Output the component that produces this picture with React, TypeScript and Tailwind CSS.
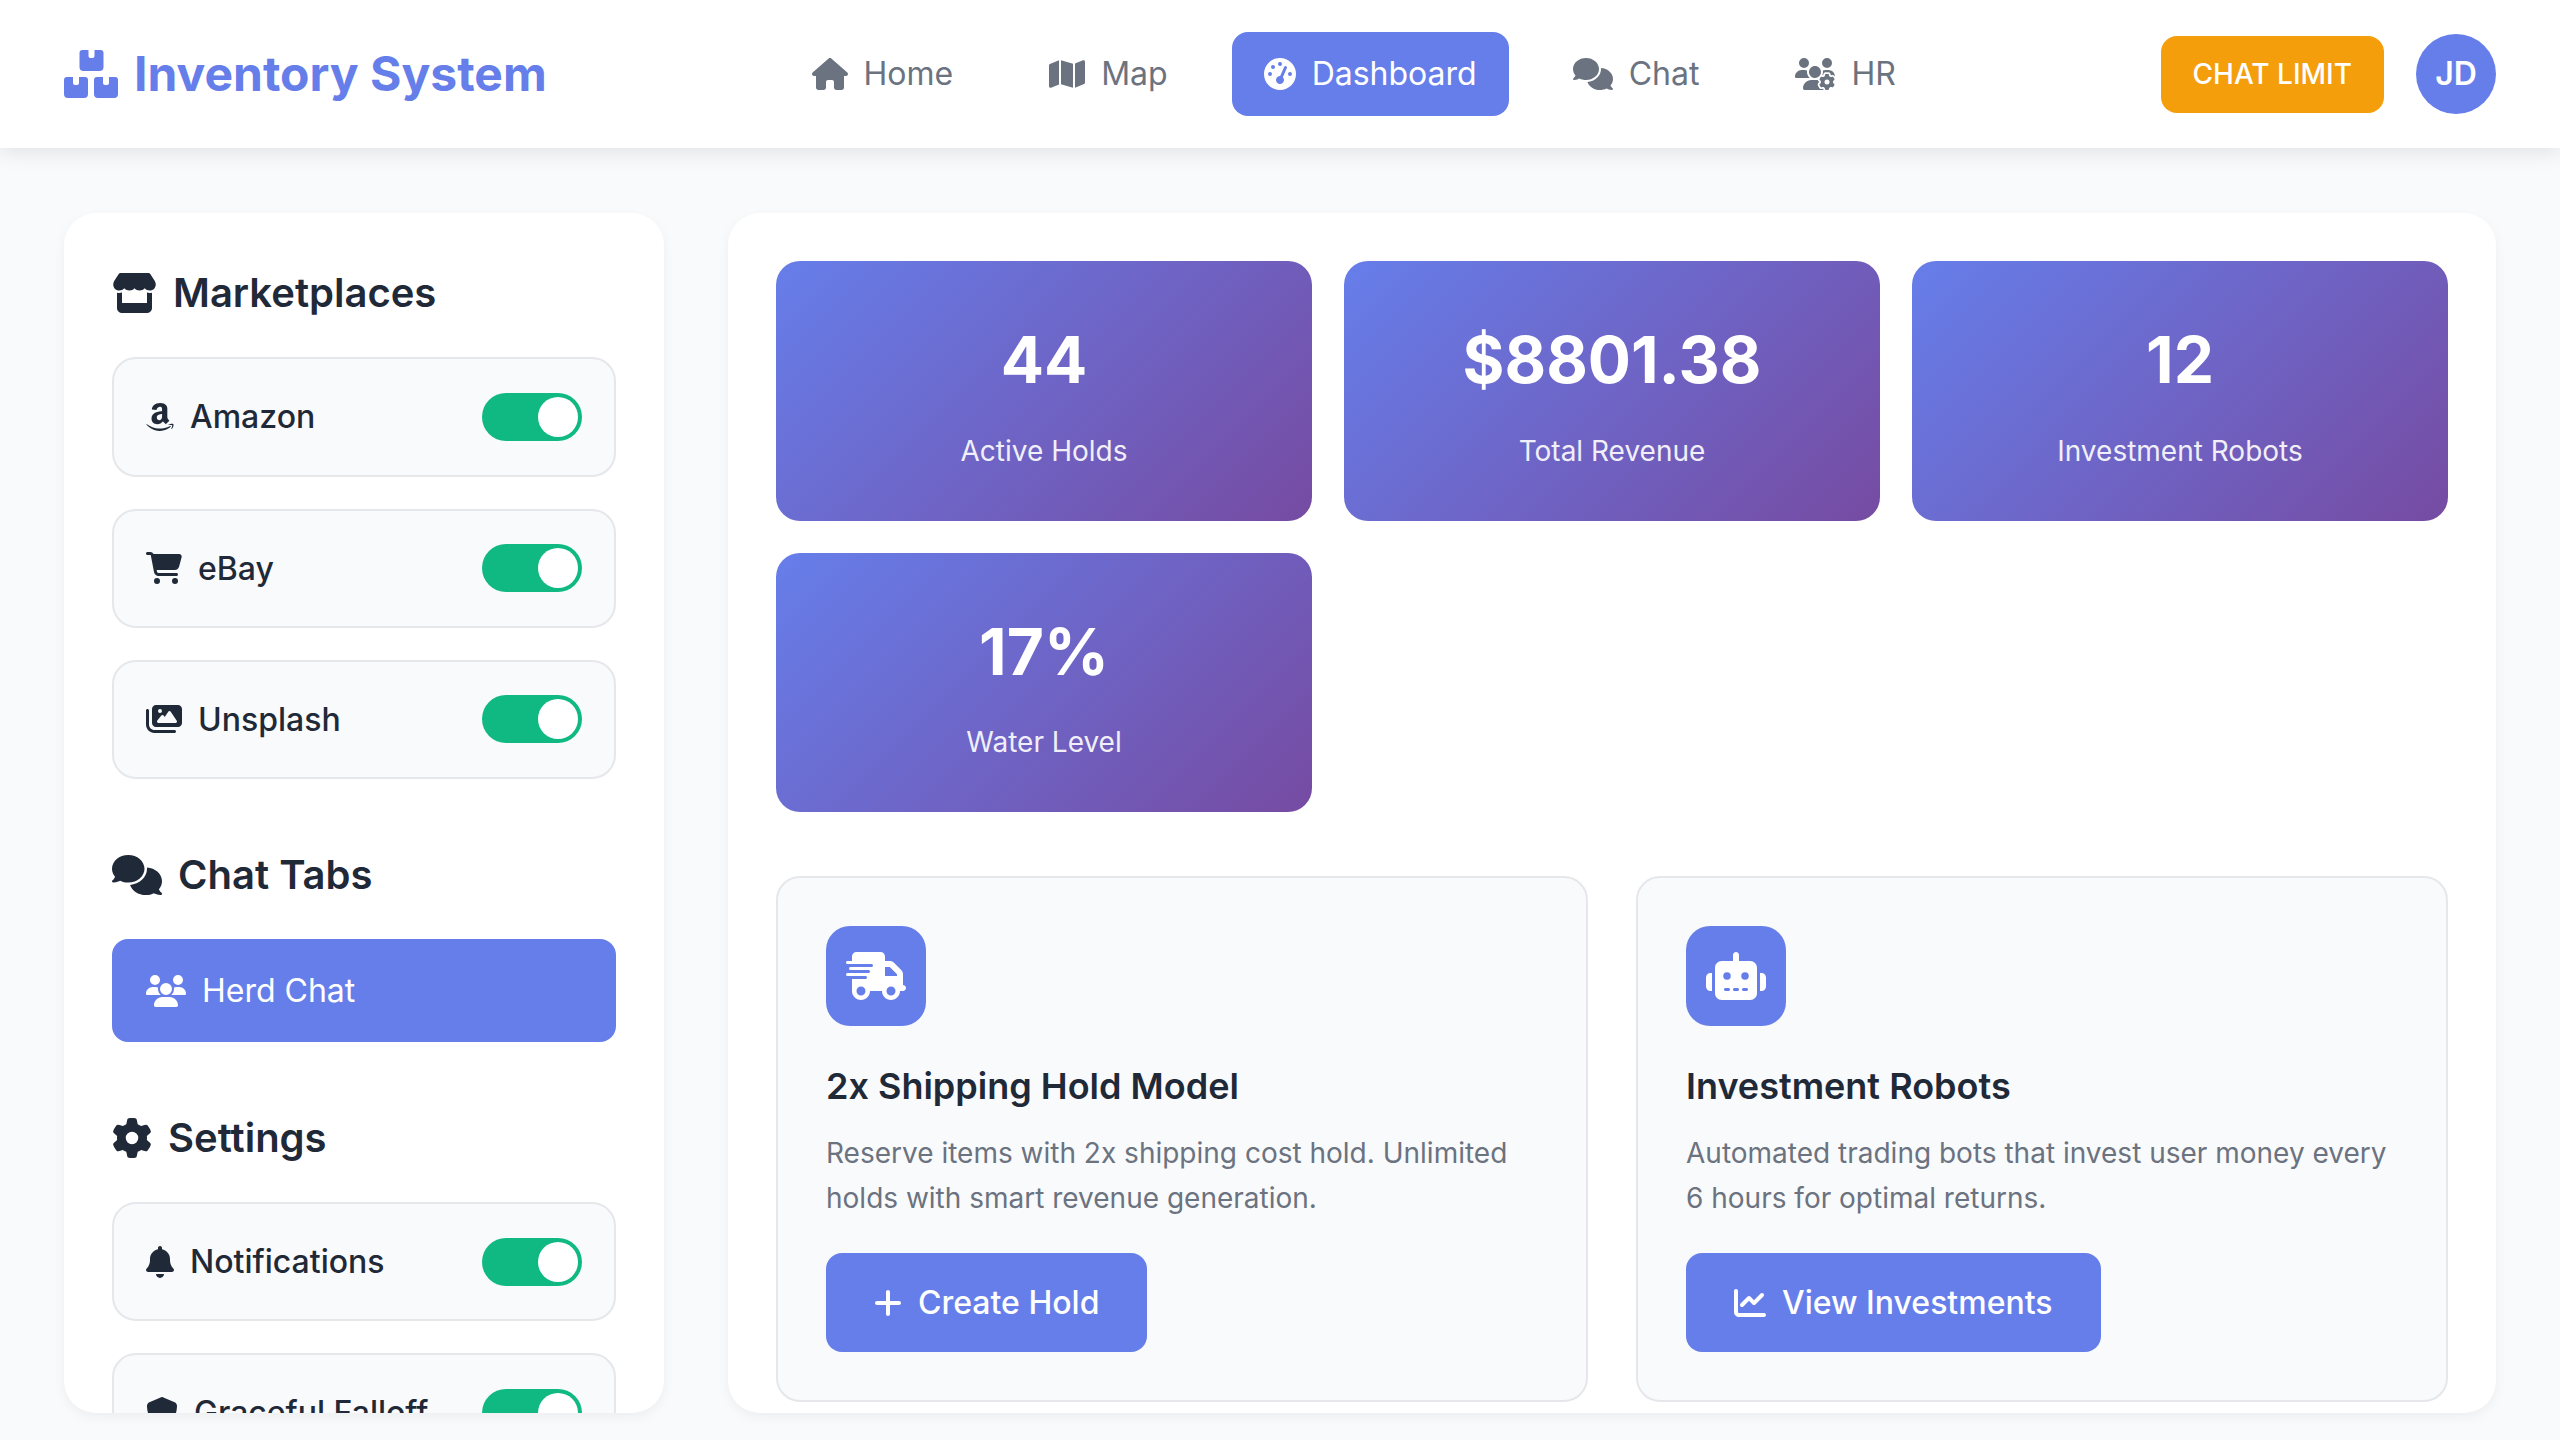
import React from "react";
import {
  FaHouse, FaMap, FaGaugeHigh, FaComments, FaUsersGear, FaStore, FaAmazon,
  FaCartShopping, FaImages, FaUsers, FaGear, FaBell, FaShield, FaTruckFast, FaRobot, FaPlus, FaChartLine,
} from "react-icons/fa6";

type IconT = React.ComponentType<{ className?: string }>;

const BOX = "M3 27H9V33a2 2 0 0 0 2 2h2a2 2 0 0 0 2-2V27H21a3 3 0 0 1 3 3V44a4 4 0 0 1-4 4H4a4 4 0 0 1-4-4V30a3 3 0 0 1 3-3Z";

function Logo() {
  return (
    <svg viewBox="0 0 54 48" className="h-12 w-[54px]" fill="currentColor">
      <path d={BOX} />
      <path d={BOX} transform="translate(30 0)" />
      <path d={BOX} transform="translate(15.5 -27)" />
    </svg>
  );
}

function NavItem({ icon: I, size, label, active }: { icon: IconT; size: string; label: string; active?: boolean }) {
  return (
    <a className={`flex items-center gap-4 px-8 py-4 rounded-2xl text-[32px] leading-[51.2px] font-normal ${active ? "bg-[#667eea] text-white" : "text-[#6b7280]"}`}>
      <I className={size} />
      <span>{label}</span>
    </a>
  );
}

function Heading({ icon: I, size, label }: { icon: IconT; size: string; label: string }) {
  return (
    <h3 className="flex items-center gap-4 mb-8 text-[40px] leading-16 font-semibold text-[#1f2937]">
      <I className={size} />
      <span>{label}</span>
    </h3>
  );
}

function ToggleRow({ icon: I, size, label }: { icon: IconT; size: string; label: string }) {
  return (
    <div className="flex items-center justify-between mb-8 px-8 py-8 bg-[#f9fafb] border-2 border-[#e5e7eb] rounded-3xl">
      <div className="flex items-center gap-4 text-[32px] leading-[51.2px] font-medium text-[#1f2937]">
        <I className={size} />
        <span>{label}</span>
      </div>
      <div className="relative w-[100px] h-12 rounded-full bg-[#10b981]">
        <span className="absolute right-1 top-1 w-10 h-10 rounded-full bg-white" />
      </div>
    </div>
  );
}

function Stat({ value, label }: { value: string; label: string }) {
  return (
    <div className="p-12 rounded-3xl text-center text-white bg-[linear-gradient(135deg,#667eea,#764ba2)]">
      <div className="mb-4 text-[64px] leading-[102.4px] font-bold">{value}</div>
      <div className="pt-px -mb-px text-[28px] leading-[44.8px] opacity-90">{label}</div>
    </div>
  );
}

function Feature({ icon: I, title, desc, btnIcon: B, btnSize, btn }: { icon: IconT; title: string; desc: string; btnIcon: IconT; btnSize: string; btn: string }) {
  return (
    <div className="p-12 bg-[#f9fafb] border-2 border-[#e5e7eb] rounded-3xl">
      <div className="flex items-center justify-center w-[100px] h-[100px] mb-8 rounded-3xl bg-[#667eea] text-white">
        <I className="h-12 w-[60px]" />
      </div>
      <h4 className="mb-4 text-[36px] leading-[57.6px] font-semibold text-[#1f2937]">{title}</h4>
      <p className="mb-8 text-[28px] leading-[44.8px] text-[#6b7280]">{desc}</p>
      <button className="inline-flex items-center gap-4 px-12 py-6 rounded-2xl bg-[#667eea] text-white text-[32px] leading-[51.2px] font-medium">
        <B className={btnSize} />
        <span>{btn}</span>
      </button>
    </div>
  );
}

export default function App() {
  return (
    <div className="h-screen overflow-hidden bg-[#f9fafb] font-['Inter',sans-serif]">
      <header className="relative z-10 flex items-center justify-between h-[148px] px-16 bg-white shadow-[0_4px_20px_rgba(0,0,0,0.1)]">
        <div className="flex items-center gap-4 text-[48px] font-bold text-[#667eea]">
          <Logo />
          <span>Inventory System</span>
        </div>
        <nav className="flex items-center gap-8">
          <NavItem icon={FaHouse} size="h-8 w-9" label="Home" />
          <NavItem icon={FaMap} size="h-8 w-9" label="Map" />
          <NavItem icon={FaGaugeHigh} size="h-8 w-8" label="Dashboard" active />
          <NavItem icon={FaComments} size="h-8 w-10" label="Chat" />
          <NavItem icon={FaUsersGear} size="h-8 w-10" label="HR" />
        </nav>
        <div className="flex items-center gap-8">
          <button className="h-[77px] px-8 rounded-2xl bg-[#f59e0b] text-white text-[28px] font-medium">CHAT LIMIT</button>
          <div className="flex items-center justify-center w-20 h-20 rounded-full bg-[#667eea] text-white text-[32px] font-semibold">JD</div>
        </div>
      </header>
      <main className="grid grid-cols-[600px_1fr] gap-16 px-16 pt-[65.4px]">
        <aside className="h-[1200px] overflow-hidden p-12 bg-white rounded-[32px] shadow-[0_4px_12px_rgba(0,0,0,0.05)]">
          <div className="pb-8">
            <Heading icon={FaStore} size="h-10 w-[45px]" label="Marketplaces" />
            <ToggleRow icon={FaAmazon} size="h-8 w-7" label="Amazon" />
            <ToggleRow icon={FaCartShopping} size="h-8 w-9" label="eBay" />
            <ToggleRow icon={FaImages} size="h-8 w-9" label="Unsplash" />
          </div>
          <div className="pb-8">
            <Heading icon={FaComments} size="h-10 w-[50px]" label="Chat Tabs" />
            <div className="flex items-center gap-4 mb-8 px-8 py-6 rounded-2xl border-2 border-[#667eea] bg-[#667eea] text-white text-[32px] leading-[51.2px] font-normal">
              <FaUsers className="h-8 w-10" />
              <span>Herd Chat</span>
            </div>
          </div>
          <div>
            <Heading icon={FaGear} size="h-10 w-10" label="Settings" />
            <ToggleRow icon={FaBell} size="h-8 w-7" label="Notifications" />
            <ToggleRow icon={FaShield} size="h-8 w-8" label="Graceful Falloff" />
          </div>
        </aside>
        <section className="h-[1200px] overflow-hidden p-12 bg-white rounded-[32px] shadow-[0_4px_12px_rgba(0,0,0,0.05)]">
          <div className="grid grid-cols-3 gap-8 mb-16">
            <Stat value="44" label="Active Holds" />
            <Stat value="$8801.38" label="Total Revenue" />
            <Stat value="12" label="Investment Robots" />
            <Stat value="17%" label="Water Level" />
          </div>
          <div className="grid grid-cols-2 gap-12">
            <Feature icon={FaTruckFast} title="2x Shipping Hold Model" desc="Reserve items with 2x shipping cost hold. Unlimited holds with smart revenue generation." btnIcon={FaPlus} btnSize="h-8 w-7" btn="Create Hold" />
            <Feature icon={FaRobot} title="Investment Robots" desc="Automated trading bots that invest user money every 6 hours for optimal returns." btnIcon={FaChartLine} btnSize="h-8 w-8" btn="View Investments" />
          </div>
        </section>
      </main>
    </div>
  );
}
